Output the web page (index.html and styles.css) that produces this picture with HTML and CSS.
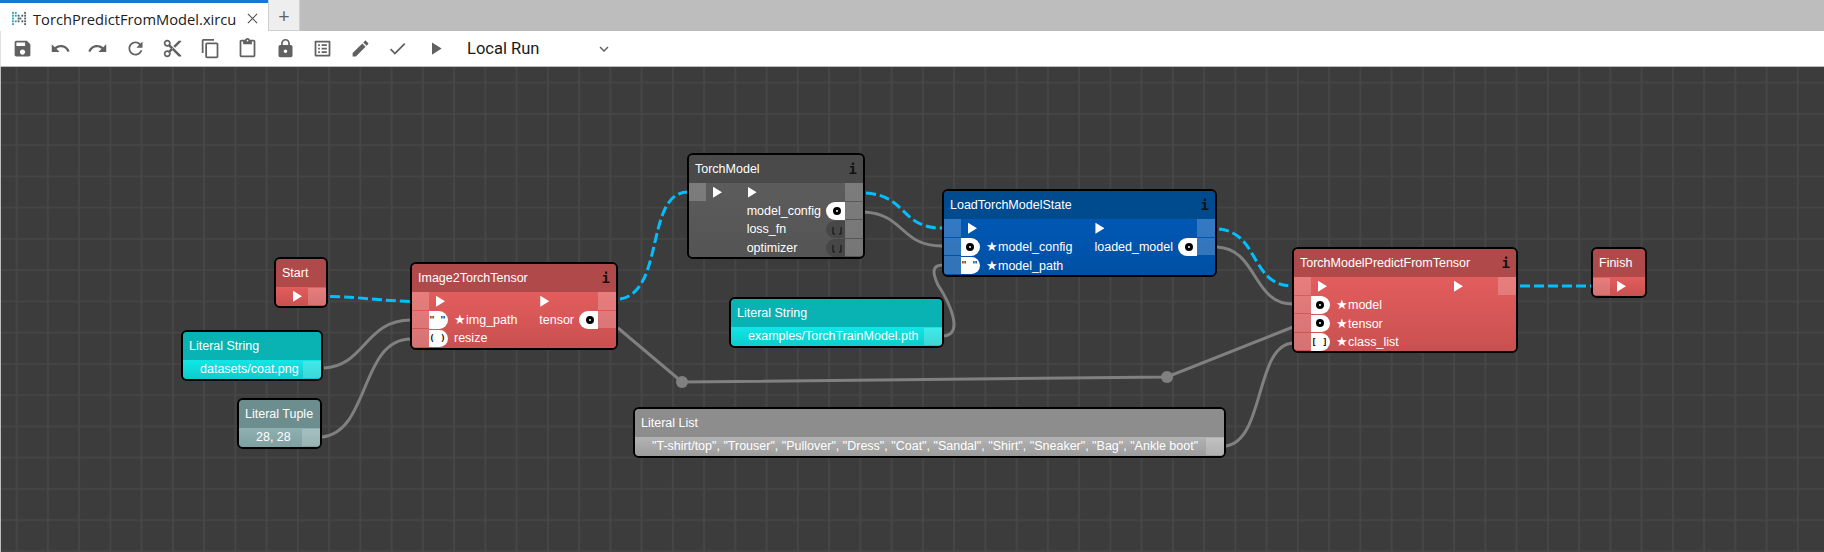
FILE: index.html
```html
<!DOCTYPE html>
<html lang="en">
<head>
<meta charset="utf-8">
<title>TorchPredictFromModel.xircuits</title>
<link rel="stylesheet" href="styles.css">
</head>
<body>
<header class="tabbar">
  <div class="tab">
    <svg class="tab-logo" viewBox="0 0 16 16" aria-hidden="true">
      <g fill="#2aa7b8"><rect x="0" y="1" width="2" height="2"/><rect x="3" y="1" width="2" height="2"/><rect x="0" y="4" width="2" height="2"/><rect x="3" y="4" width="2" height="2"/><rect x="0" y="7" width="2" height="2"/><rect x="0" y="10" width="2" height="2"/><rect x="3" y="10" width="2" height="2"/><rect x="0" y="13" width="2" height="2"/></g>
      <g fill="#53606b"><rect x="6" y="4" width="2" height="2"/><rect x="6" y="7" width="2" height="2"/><rect x="8" y="7" width="2" height="2"/><rect x="6" y="10" width="2" height="2"/><rect x="10" y="4" width="2" height="2"/><rect x="10" y="10" width="2" height="2"/><rect x="13" y="1" width="2" height="2"/><rect x="13" y="4" width="2" height="2"/><rect x="13" y="7" width="2" height="2"/><rect x="13" y="10" width="2" height="2"/><rect x="13" y="13" width="2" height="2"/></g>
    </svg>
    <span class="tab-name">TorchPredictFromModel.xircu</span>
    <svg class="tab-close" viewBox="0 0 12 12" aria-hidden="true"><path d="M1 1L11 11M11 1L1 11"/></svg>
  </div>
  <div class="tab-add">+</div>
</header>

<nav class="toolbar">
  <span class="tool"><svg viewBox="0 0 24 24"><path d="M17 3H5c-1.11 0-2 .9-2 2v14c0 1.1.89 2 2 2h14c1.1 0 2-.9 2-2V7l-4-4zm-5 16c-1.66 0-3-1.34-3-3s1.34-3 3-3 3 1.34 3 3-1.34 3-3 3zm3-10H5V5h10v4z"/></svg></span>
  <span class="tool"><svg viewBox="0 0 24 24"><path d="M12.5 8c-2.65 0-5.05.99-6.9 2.6L2 7v9h9l-3.62-3.62c1.39-1.16 3.16-1.88 5.12-1.88 3.54 0 6.55 2.31 7.6 5.5l2.37-.78C21.08 11.03 17.15 8 12.5 8z"/></svg></span>
  <span class="tool"><svg viewBox="0 0 24 24"><path d="M18.4 10.6C16.55 8.99 14.15 8 11.5 8c-4.65 0-8.58 3.03-9.96 7.22L3.9 16c1.05-3.19 4.05-5.5 7.6-5.5 1.95 0 3.73.72 5.12 1.88L13 16h9V7l-3.6 3.6z"/></svg></span>
  <span class="tool"><svg viewBox="0 0 24 24"><path d="M17.65 6.35C16.2 4.9 14.21 4 12 4c-4.42 0-7.99 3.58-7.99 8s3.57 8 7.99 8c3.73 0 6.84-2.55 7.73-6h-2.08c-.82 2.33-3.04 4-5.65 4-3.31 0-6-2.69-6-6s2.69-6 6-6c1.66 0 3.14.69 4.22 1.78L13 11h7V4l-2.35 2.35z"/></svg></span>
  <span class="tool"><svg viewBox="0 0 24 24"><path d="M9.64 7.64c.23-.5.36-1.05.36-1.64 0-2.21-1.79-4-4-4S2 3.79 2 6s1.79 4 4 4c.59 0 1.14-.13 1.64-.36L10 12l-2.36 2.36C7.14 14.13 6.59 14 6 14c-2.21 0-4 1.79-4 4s1.79 4 4 4 4-1.79 4-4c0-.59-.13-1.14-.36-1.64L12 14l7 7h3v-1L9.64 7.64zM6 8c-1.1 0-2-.89-2-2s.9-2 2-2 2 .89 2 2-.9 2-2 2zm0 12c-1.1 0-2-.89-2-2s.9-2 2-2 2 .89 2 2-.9 2-2 2zm6-7.5c-.28 0-.5-.22-.5-.5s.22-.5.5-.5.5.22.5.5-.22.5-.5.5zM19 3l-6 6 2 2 7-7V3z"/></svg></span>
  <span class="tool"><svg viewBox="0 0 24 24"><path d="M16 1H4c-1.1 0-2 .9-2 2v14h2V3h12V1zm3 4H8c-1.1 0-2 .9-2 2v14c0 1.1.9 2 2 2h11c1.1 0 2-.9 2-2V7c0-1.1-.9-2-2-2zm0 16H8V7h11v14z"/></svg></span>
  <span class="tool"><svg viewBox="0 0 24 24"><path d="M19 2h-4.18C14.4.84 13.3 0 12 0c-1.3 0-2.4.84-2.82 2H5c-1.1 0-2 .9-2 2v16c0 1.1.9 2 2 2h14c1.1 0 2-.9 2-2V4c0-1.1-.9-2-2-2zm-7 0c.55 0 1 .45 1 1s-.45 1-1 1-1-.45-1-1 .45-1 1-1zm7 18H5V4h2v3h10V4h2v16z"/></svg></span>
  <span class="tool"><svg viewBox="0 0 24 24"><path d="M18 8h-1V6c0-2.76-2.24-5-5-5S7 3.24 7 6v2H6c-1.1 0-2 .9-2 2v10c0 1.1.9 2 2 2h12c1.1 0 2-.9 2-2V10c0-1.1-.9-2-2-2zm-6 9c-1.1 0-2-.9-2-2s.9-2 2-2 2 .9 2 2-.9 2-2 2zm3.1-9H8.9V6c0-1.71 1.39-3.1 3.1-3.1 1.71 0 3.1 1.39 3.1 3.1v2z"/></svg></span>
  <span class="tool"><svg viewBox="0 0 24 24"><path d="M19 5v14H5V5h14m1.1-2H3.9c-.5 0-.9.4-.9.9v16.2c0 .4.4.9.9.9h16.2c.4 0 .9-.5.9-.9V3.9c0-.5-.5-.9-.9-.9zM11 7h6v2h-6V7zm0 4h6v2h-6v-2zm0 4h6v2h-6zM7 7h2v2H7zm0 4h2v2H7zm0 4h2v2H7z"/></svg></span>
  <span class="tool"><svg viewBox="0 0 24 24"><path d="M3 17.25V21h3.75L17.81 9.94l-3.75-3.75L3 17.25zM20.71 7.04c.39-.39.39-1.02 0-1.41l-2.34-2.34c-.39-.39-1.02-.39-1.41 0l-1.83 1.83 3.75 3.75 1.83-1.83z"/></svg></span>
  <span class="tool"><svg viewBox="0 0 24 24"><path d="M9 16.17L4.83 12l-1.42 1.41L9 19 21 7l-1.41-1.41z"/></svg></span>
  <span class="tool"><svg viewBox="0 0 24 24"><path d="M8 5v14l11-7z"/></svg></span>
  <div class="select">
    <span>Local Run</span>
    <svg viewBox="0 0 24 24"><path d="M7.41 8.59L12 13.17l4.59-4.58L18 10l-6 6-6-6z"/></svg>
  </div>
</nav>

<main class="canvas">
  <svg class="wires" viewBox="0 67 1824 485" aria-hidden="true">
    <g class="wire">
      <path d="M324 368C365 366 365 320 411 320"/>
      <path d="M322 437C370 432 360 339 411 339"/>
      <path d="M864 212C905 214 900 246 942 246"/>
      <path d="M944 336C965 334 948 300 938 285C932 272 932 265 943 265"/>
      <path d="M1217 247C1258 249 1252 304 1293 304"/>
      <path d="M618 328L682 382L1167 377L1293 327"/>
      <path d="M1226 446C1265 440 1255 345 1293 343"/>
    </g>
    <circle class="joint" cx="682" cy="382" r="6"/>
    <circle class="joint" cx="1167" cy="377" r="6"/>
    <g class="flow">
      <path d="M330 296.500C360 297 385 301 411 301.500"/>
      <path d="M620 299C665 292 645 192 688 192"/>
      <path d="M866 193C908 196 900 228 942 228"/>
      <path d="M1219 229C1260 233 1250 286 1293 286"/>
      <path d="M1520 286L1592 286"/>
    </g>
  </svg>

  <section class="node red n-start">
    <h3 class="title">Start</h3>
    <div class="lit-row"><i class="arrow start-arrow"></i><b class="port end"></b></div>
  </section>

  <section class="node teal n-lit1">
    <h3 class="title">Literal String</h3>
    <div class="lit-row"><span class="value">datasets/coat.png</span><b class="port end"></b></div>
  </section>

  <section class="node slate n-tuple">
    <h3 class="title">Literal Tuple</h3>
    <div class="lit-row"><span class="value">28, 28</span><b class="port end"></b></div>
  </section>

  <section class="node red n-image">
    <h3 class="title">Image2TorchTensor<span class="info">i</span></h3>
    <div class="body">
      <b class="port"></b><div class="left"><i class="arrow"></i></div><div class="right"><i class="arrow"></i></div><b class="port"></b>
      <b class="port"></b><div class="left"><span class="pill in">" "</span><span class="label">★img_path</span></div><div class="right"><span class="label-out">tensor</span><span class="pill out"><i class="dot"></i></span></div><b class="port"></b>
      <b class="port"></b><div class="left"><span class="pill in">( )</span><span class="label">resize</span></div><div class="right"></div><b class="none"></b>
    </div>
  </section>

  <section class="node grey n-model">
    <h3 class="title">TorchModel<span class="info">i</span></h3>
    <div class="body">
      <b class="port"></b><div class="left"><i class="arrow"></i></div><div class="right"><i class="arrow"></i></div><b class="port"></b>
      <b class="none"></b><div class="left"></div><div class="right"><span class="label-out">model_config</span><span class="pill out"><i class="dot"></i></span></div><b class="port"></b>
      <b class="none"></b><div class="left"></div><div class="right"><span class="label-out">loss_fn</span><span class="pill out dark"><svg class="bracket" viewBox="0 0 10 8"><path d="M1 0V7H3M9 0V7H7"/></svg></span></div><b class="port"></b>
      <b class="none"></b><div class="left"></div><div class="right"><span class="label-out">optimizer</span><span class="pill out dark"><svg class="bracket" viewBox="0 0 10 8"><path d="M1 0V7H3M9 0V7H7"/></svg></span></div><b class="port"></b>
    </div>
  </section>

  <section class="node blue n-load">
    <h3 class="title">LoadTorchModelState<span class="info">i</span></h3>
    <div class="body">
      <b class="port"></b><div class="left"><i class="arrow"></i></div><div class="right"><i class="arrow"></i></div><b class="port"></b>
      <b class="port"></b><div class="left"><span class="pill in"><i class="dot"></i></span><span class="label">★model_config</span></div><div class="right"><span class="label-out">loaded_model</span><span class="pill out"><i class="dot"></i></span></div><b class="port"></b>
      <b class="port"></b><div class="left"><span class="pill in">" "</span><span class="label">★model_path</span></div><div class="right"></div><b class="none"></b>
    </div>
  </section>

  <section class="node teal n-lit2">
    <h3 class="title">Literal String</h3>
    <div class="lit-row"><span class="value">examples/TorchTrainModel.pth</span><b class="port end"></b></div>
  </section>

  <section class="node red n-predict">
    <h3 class="title">TorchModelPredictFromTensor<span class="info">i</span></h3>
    <div class="body">
      <b class="port"></b><div class="left"><i class="arrow"></i></div><div class="right wide"><i class="arrow"></i></div><b class="port"></b>
      <b class="port"></b><div class="left"><span class="pill in"><i class="dot"></i></span><span class="label">★model</span></div><div class="right"></div><b class="none"></b>
      <b class="port"></b><div class="left"><span class="pill in"><i class="dot"></i></span><span class="label">★tensor</span></div><div class="right"></div><b class="none"></b>
      <b class="port"></b><div class="left"><span class="pill in">[ ]</span><span class="label">★class_list</span></div><div class="right"></div><b class="none"></b>
    </div>
  </section>

  <section class="node red n-finish">
    <h3 class="title">Finish</h3>
    <div class="lit-row"><b class="port"></b><i class="arrow"></i></div>
  </section>

  <section class="node silver n-list">
    <h3 class="title">Literal List</h3>
    <div class="lit-row"><span class="value">"T-shirt/top", "Trouser", "Pullover", "Dress", "Coat", "Sandal", "Shirt", "Sneaker", "Bag", "Ankle boot"</span><b class="port end"></b></div>
  </section>
</main>
</body>
</html>
```

FILE: styles.css
```css
* { box-sizing: border-box; }

html, body {
  margin: 0;
  height: 100%;
}

body {
  width: 1824px;
  height: 552px;
  overflow: hidden;
  display: flex;
  flex-direction: column;
  font-family: "Liberation Sans", Arial, sans-serif;
  background: #fff;
}

/* tab bar */
.tabbar {
  display: flex;
  flex: 0 0 31px;
  background: #bdbdbd;
}

.tab {
  width: 268px;
  display: flex;
  align-items: center;
  gap: 6px;
  padding: 3px 0 0 12px;
  background: #fff;
  border-top: 3px solid #1976d2;
}

.tab-logo {
  flex: 0 0 15px;
  width: 15px;
  height: 15px;
}

.tab-name {
  flex: 0 0 205px;
  white-space: nowrap;
  font-family: "Open Sans", sans-serif;
  font-size: 14.700px;
  color: #212121;
}

.tab-close {
  width: 11px;
  height: 11px;
  margin-left: 3px;
  fill: none;
  stroke: #555;
  stroke-width: 1.300;
}

.tab-add {
  width: 32px;
  display: flex;
  align-items: center;
  justify-content: center;
  background: #eee;
  border: 1px solid #d0d0d0;
  border-top: 0;
  font-family: "Open Sans", sans-serif;
  font-size: 20px;
  color: #616161;
}

/* toolbar */
.toolbar {
  flex: 0 0 36px;
  display: flex;
  align-items: center;
  padding-left: 3px;
  background: #fff;
  border-bottom: 1px solid #bdbdbd;
  border-left: 1px solid #e0e0e0;
}

.tool {
  flex: 0 0 37.500px;
  display: flex;
  justify-content: center;
}

.tool svg {
  width: 21px;
  height: 21px;
  fill: #616161;
}

.select {
  width: 146px;
  margin-left: 13px;
  display: flex;
  align-items: center;
  justify-content: space-between;
  font-family: Roboto, sans-serif;
  font-size: 16.500px;
  color: #1a1a1a;
}

.select svg {
  width: 18px;
  height: 18px;
  fill: #616161;
}

/* canvas */
.canvas {
  position: relative;
  flex: 1;
  overflow: hidden;
  background-color: #3c3c3c;
  background-image:
    linear-gradient(to right, transparent 0, transparent 15.500px, #464646 15.500px, #464646 17.500px, transparent 17.500px),
    linear-gradient(to bottom, transparent 0, transparent 14.500px, #444 14.500px, #444 16.500px, transparent 16.500px);
  background-size: 31.250px 31.250px;
  box-shadow: inset 1px 0 #bdbdbd;
}

.wires {
  position: absolute;
  left: 0;
  top: 0;
  width: 1824px;
  height: 485px;
}

.wire path {
  fill: none;
  stroke: #808080;
  stroke-width: 3;
}

.joint {
  fill: #808080;
}

.flow path {
  fill: none;
  stroke: #00bfff;
  stroke-width: 3;
  stroke-dasharray: 10 4;
}

/* nodes */
.node {
  position: absolute;
  display: flex;
  flex-direction: column;
  border: 2px solid #000;
  border-radius: 6px;
  overflow: hidden;
  color: #fff;
  font-size: 12.500px;
  box-shadow: inset 0 0 0 1px rgba(255, 255, 255, .12);
}

.title {
  flex: 0 0 28px;
  display: flex;
  align-items: center;
  justify-content: space-between;
  margin: 0;
  padding: 0 6px 1px 6px;
  font-size: 12.500px;
  font-weight: 400;
  white-space: nowrap;
}

.info {
  font-family: "DejaVu Sans Mono", monospace;
  font-size: 14px;
  font-weight: 700;
  color: #111;
}

.body {
  flex: 1;
  display: grid;
  grid-template-columns: 17px 1fr auto 18px;
  grid-auto-rows: 18.500px;
}

.port {
  display: block;
  height: 17.500px;
  background: rgba(255, 255, 255, .2);
}

.none {
  display: block;
}

.left, .right {
  display: flex;
  align-items: center;
  min-width: 0;
  white-space: nowrap;
}

.right {
  justify-content: space-between;
}

.right.wide {
  min-width: 45px;
}

.arrow {
  display: block;
  flex: none;
  width: 9px;
  height: 11px;
  margin-left: 7px;
  background: #fff;
  clip-path: polygon(0 0, 100% 50%, 0 100%);
}

.right .arrow {
  margin-left: 1px;
}

.pill {
  flex: none;
  width: 19px;
  height: 17.500px;
  display: flex;
  align-items: center;
  justify-content: center;
  background: #fff;
  color: #111;
  font-family: "DejaVu Sans Mono", monospace;
  font-size: 9px;
  font-weight: 700;
  overflow: hidden;
}

.pill.in {
  border-radius: 0 9px 9px 0;
  padding-right: 2px;
}

.pill.out {
  border-radius: 9px 0 0 9px;
  padding-left: 2px;
}

.pill.dark {
  background: #474747;
}

.bracket {
  flex: none;
  width: 10px;
  height: 8px;
  margin-top: 3px;
  fill: none;
  stroke: #111;
  stroke-width: 1;
}

.dot {
  display: block;
  width: 8px;
  height: 8px;
  border: 3px solid #000;
  border-radius: 50%;
  background: #fff;
}

.label {
  margin-left: 6px;
}

.label-out {
  margin-right: 5px;
}

.lit-row {
  flex: 0 0 18.500px;
  display: flex;
  align-items: center;
  justify-content: flex-end;
  white-space: nowrap;
}

.lit-row .value {
  flex: 1;
  padding-left: 17px;
}

.lit-row .port.end {
  flex: 0 0 18px;
}

.lit-row:has(> .port:first-child) {
  justify-content: flex-start;
}

.lit-row:has(> .port:first-child) .port {
  flex: 0 0 17px;
}

.start-arrow {
  margin: 0 6px 0 0;
}

/* colours */
.red .title { background: #b04a4a; }
.red .body, .red .lit-row { background: linear-gradient(#e35d5d, #c95050); }

.blue .title { background: #004a8e; }
.blue .body { background: linear-gradient(#0058b4, #0050a4); }

.grey .title { background: #4a4a4a; }
.grey .body { background: linear-gradient(#5c5c5c, #545454); }

.teal .title { background: #09b3b3; }
.teal .lit-row { background: linear-gradient(#12e6e6, #0dcccc); }

.slate .title { background: #6d8e8e; }
.slate .lit-row { background: linear-gradient(#8db0b0, #7fa0a0); }

.silver .title { background: #8d8d8d; }
.silver .lit-row { background: linear-gradient(#b3b3b3, #9c9c9c); }

/* node positions on the canvas */
.n-start { left: 274px; top: 190px; width: 54px; }
.n-lit1 { left: 181px; top: 263px; width: 142px; }
.n-tuple { left: 237px; top: 331px; width: 85px; }
.n-image { left: 410px; top: 195px; width: 208px; }
.n-model { left: 687px; top: 86px; width: 178px; }
.n-load { left: 942px; top: 122px; width: 275px; }
.n-lit2 { left: 729px; top: 230px; width: 215px; }
.n-predict { left: 1292px; top: 180px; width: 226px; }
.n-finish { left: 1591px; top: 180px; width: 56px; }
.n-list { left: 633px; top: 340px; width: 593px; }
```
